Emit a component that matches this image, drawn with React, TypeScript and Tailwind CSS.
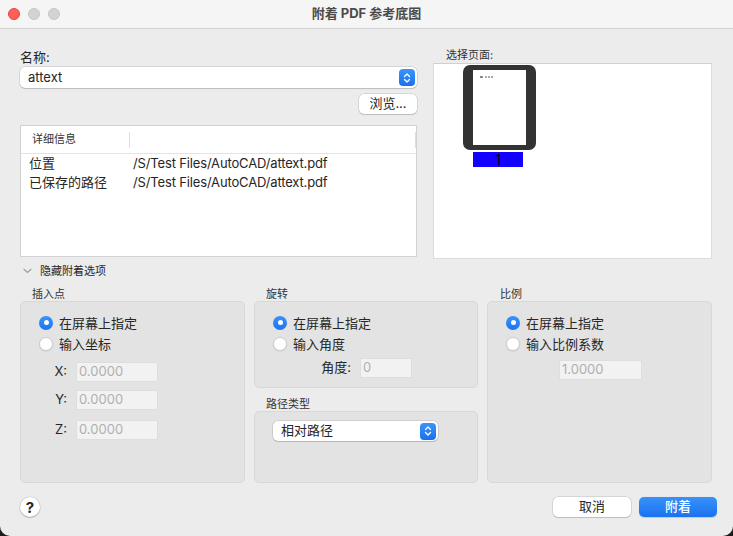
import React from "react";

function Stepper() {
  return (
    <div className="w-[16px] h-[17px] rounded-[4px] bg-linear-to-b from-[#3c95fa] to-[#1870ee] flex items-center justify-center shrink-0">
      <svg width="8" height="12" viewBox="0 0 8 12" fill="none" stroke="white" strokeWidth="1.4" strokeLinecap="round" strokeLinejoin="round">
        <path d="M1.5 4.5 L4 2 L6.5 4.5" />
        <path d="M1.5 7.5 L4 10 L6.5 7.5" />
      </svg>
    </div>
  );
}

function Radio({ checked, label }: { checked?: boolean; label: string }) {
  return (
    <div className="flex items-center h-[21px]">
      {checked ? (
        <span className="w-[14px] h-[14px] rounded-full bg-linear-to-b from-[#3a92f9] to-[#1a74f0] flex items-center justify-center shrink-0">
          <span className="w-[5px] h-[5px] rounded-full bg-white" />
        </span>
      ) : (
        <span className="w-[14px] h-[14px] rounded-full bg-white border border-[#cdcdcd] shadow-[0_0.5px_1px_rgba(0,0,0,0.12)] shrink-0" />
      )}
      <span className="ml-[6px] text-[13px] leading-[16px] text-[#262626]">{label}</span>
    </div>
  );
}

function Field({ value, w }: { value: string; w: string }) {
  return (
    <div className={`${w} h-[20px] bg-[#f2f2f2] border border-[#dedede] flex items-center pl-[2px] text-[13px] text-[#b0b0b0]`}>
      {value}
    </div>
  );
}

export default function App() {
  return (
    <div className="w-[733px] h-[536px] bg-[#1c1c1c] font-[Inter,'Noto_Sans_CJK_SC',sans-serif] text-[#262626]">
      <div className="w-[733px] h-[536px] bg-[#ececec] rounded-b-[10px] flex flex-col">
        {/* Title bar */}
        <div className="h-[29px] bg-[#f5f5f5] border-b border-[#d3d3d3] flex items-center relative shrink-0">
          <div className="flex items-center gap-[8px] pl-[8px]">
            <span className="w-[12px] h-[12px] rounded-full bg-[#fe5f57] border border-[#e2463f]" />
            <span className="w-[12px] h-[12px] rounded-full bg-[#d3d3d3] border border-[#c6c6c6]" />
            <span className="w-[12px] h-[12px] rounded-full bg-[#d3d3d3] border border-[#c6c6c6]" />
          </div>
          <div className="flex-1 text-center text-[13px] font-bold text-[#4a4a4a] -ml-[60px]">附着 PDF 参考底图</div>
        </div>

        <div className="pl-[20px] pr-[21px] flex flex-col">
          {/* Top section */}
          <div className="mt-[19px] flex items-start gap-[16px]">
            <div className="w-[397px] flex flex-col pt-[1px]">
              <div className="text-[13px] leading-[16px]">名称:</div>
              <div className="mt-[2px] h-[21px] bg-white rounded-[5px] shadow-[0_0_0_0.5px_rgba(0,0,0,0.18),0_1px_1px_rgba(0,0,0,0.12)] flex items-center justify-between pl-[8px] pr-[2px]">
                <span className="text-[13px]">attext</span>
                <Stepper />
              </div>
              <div className="mt-[6px] flex justify-end">
                <div className="w-[58px] h-[20px] bg-white rounded-[5px] shadow-[0_0_0_0.5px_rgba(0,0,0,0.18),0_1px_1px_rgba(0,0,0,0.12)] flex items-center justify-center text-[13px]">
                  浏览...
                </div>
              </div>
              <div className="mt-[11px] h-[132px] bg-white border border-[#d2d2d2] flex flex-col">
                <div className="h-[28px] border-b border-[#e3e3e3] flex items-center">
                  <div className="w-[108px] pl-[11px] text-[11px] text-[#333]">详细信息</div>
                  <div className="h-[16px] border-l border-[#dedede] flex-1" />
                  <div className="h-[16px] border-l border-[#dedede]" />
                </div>
                <div className="flex flex-col pl-[8px]">
                  <div className="flex h-[19px] items-center text-[13px]">
                    <span className="w-[104px]">位置</span>
                    <span className="tracking-[-0.15px]">/S/Test Files/AutoCAD/attext.pdf</span>
                  </div>
                  <div className="flex h-[19px] items-center text-[13px]">
                    <span className="w-[104px]">已保存的路径</span>
                    <span className="tracking-[-0.15px]">/S/Test Files/AutoCAD/attext.pdf</span>
                  </div>
                </div>
              </div>
            </div>

            <div className="w-[279px] flex flex-col">
              <div className="pl-[13px] text-[11px] leading-[14px] text-[#333]">选择页面:</div>
              <div className="mt-[1px] h-[196px] bg-white border border-[#dcdcdc] border-t-[#d0d0d0] pl-[29px] pt-[1px]">
                <div className="w-[73px] h-[85px] bg-[#333333] rounded-[7px] pt-[5px] pl-[10px]">
                  <div className="w-[53px] h-[75px] bg-white pl-[7px] pt-[6px]">
                    <svg width="14" height="3" viewBox="0 0 14 3">
                      <rect x="0" y="0" width="3" height="2" fill="#888" />
                      <rect x="5" y="0" width="2" height="2" fill="#aaa" />
                      <rect x="8" y="0" width="2" height="2" fill="#aaa" />
                      <rect x="11" y="0" width="2" height="2" fill="#aaa" />
                    </svg>
                  </div>
                </div>
                <div className="ml-[10px] mt-[2px] w-[50px] h-[15px] bg-[#1400ff] flex items-center justify-center text-[14px] leading-[15px] text-black">
                  1
                </div>
              </div>
            </div>
          </div>

          {/* Disclosure */}
          <div className="mt-[5px] h-[14px] flex items-center">
            <svg width="9" height="6" viewBox="0 0 9 6" className="ml-[3px]" fill="none" stroke="#a0a0a0" strokeWidth="1.2" strokeLinecap="round" strokeLinejoin="round">
              <path d="M1 1.2 L4.5 4.5 L8 1.2" />
            </svg>
            <span className="ml-[8px] text-[11px] leading-[14px]">隐藏附着选项</span>
          </div>

          {/* Groups */}
          <div className="mt-[9px] flex gap-[9px]">
            {/* Insertion point */}
            <div className="w-[225px] flex flex-col">
              <div className="pl-[12px] text-[11px] leading-[14px] h-[14px] text-[#333]">插入点</div>
              <div className="h-[182px] bg-[#e3e3e3] border border-[#d8d8d8] rounded-[5px] pt-[10px] pl-[18px]">
                <Radio checked label="在屏幕上指定" />
                <Radio label="输入坐标" />
                <div className="mt-[8px] flex items-center pl-[6px]">
                  <span className="w-[22px] text-right text-[13px]">X:</span>
                  <div className="ml-[9px]"><Field value="0.0000" w="w-[82px]" /></div>
                </div>
                <div className="mt-[8px] flex items-center pl-[6px]">
                  <span className="w-[22px] text-right text-[13px]">Y:</span>
                  <div className="ml-[9px]"><Field value="0.0000" w="w-[82px]" /></div>
                </div>
                <div className="mt-[10px] flex items-center pl-[6px]">
                  <span className="w-[22px] text-right text-[13px]">Z:</span>
                  <div className="ml-[9px]"><Field value="0.0000" w="w-[82px]" /></div>
                </div>
              </div>
            </div>

            {/* Rotation + path type */}
            <div className="w-[224px] flex flex-col">
              <div className="pl-[12px] text-[11px] leading-[14px] h-[14px] text-[#333]">旋转</div>
              <div className="h-[87px] bg-[#e3e3e3] border border-[#d8d8d8] rounded-[5px] pt-[10px] pl-[18px]">
                <Radio checked label="在屏幕上指定" />
                <Radio label="输入角度" />
                <div className="mt-[4px] flex items-center">
                  <span className="w-[78px] text-right text-[13px]">角度:</span>
                  <div className="ml-[9px]"><Field value="0" w="w-[52px]" /></div>
                </div>
              </div>
              <div className="mt-[9px] pl-[12px] text-[11px] leading-[14px] h-[14px] text-[#333]">路径类型</div>
              <div className="h-[72px] bg-[#e3e3e3] border border-[#d8d8d8] rounded-[5px] pt-[9px] pl-[18px]">
                <div className="w-[165px] h-[20px] bg-white rounded-[5px] shadow-[0_0_0_0.5px_rgba(0,0,0,0.18),0_1px_1px_rgba(0,0,0,0.12)] flex items-center justify-between pl-[8px] pr-[2px]">
                  <span className="text-[13px]">相对路径</span>
                  <Stepper />
                </div>
              </div>
            </div>

            {/* Scale */}
            <div className="w-[225px] flex flex-col">
              <div className="pl-[13px] text-[11px] leading-[14px] h-[14px] text-[#333]">比例</div>
              <div className="h-[182px] bg-[#e3e3e3] border border-[#d8d8d8] rounded-[5px] pt-[10px] pl-[18px]">
                <Radio checked label="在屏幕上指定" />
                <Radio label="输入比例系数" />
                <div className="mt-[6px] pl-[53px]">
                  <Field value="1.0000" w="w-[83px]" />
                </div>
              </div>
            </div>
          </div>

          {/* Bottom buttons */}
          <div className="mt-[14px] flex items-center -mr-[5px]">
            <div className="w-[20px] h-[20px] rounded-full bg-white shadow-[0_0_0_0.5px_rgba(0,0,0,0.15),0_1px_1.5px_rgba(0,0,0,0.2)] flex items-center justify-center text-[15px] font-bold leading-none">
              ?
            </div>
            <div className="flex-1" />
            <div className="w-[78px] h-[20px] bg-white rounded-[5px] shadow-[0_0_0_0.5px_rgba(0,0,0,0.18),0_1px_1px_rgba(0,0,0,0.12)] flex items-center justify-center text-[13px]">
              取消
            </div>
            <div className="ml-[8px] w-[78px] h-[20px] rounded-[5px] bg-linear-to-b from-[#3892f9] to-[#1a72ef] shadow-[0_0.5px_1px_rgba(0,0,0,0.15)] flex items-center justify-center text-[13px] text-white font-medium">
              附着
            </div>
          </div>
        </div>
      </div>
    </div>
  );
}
